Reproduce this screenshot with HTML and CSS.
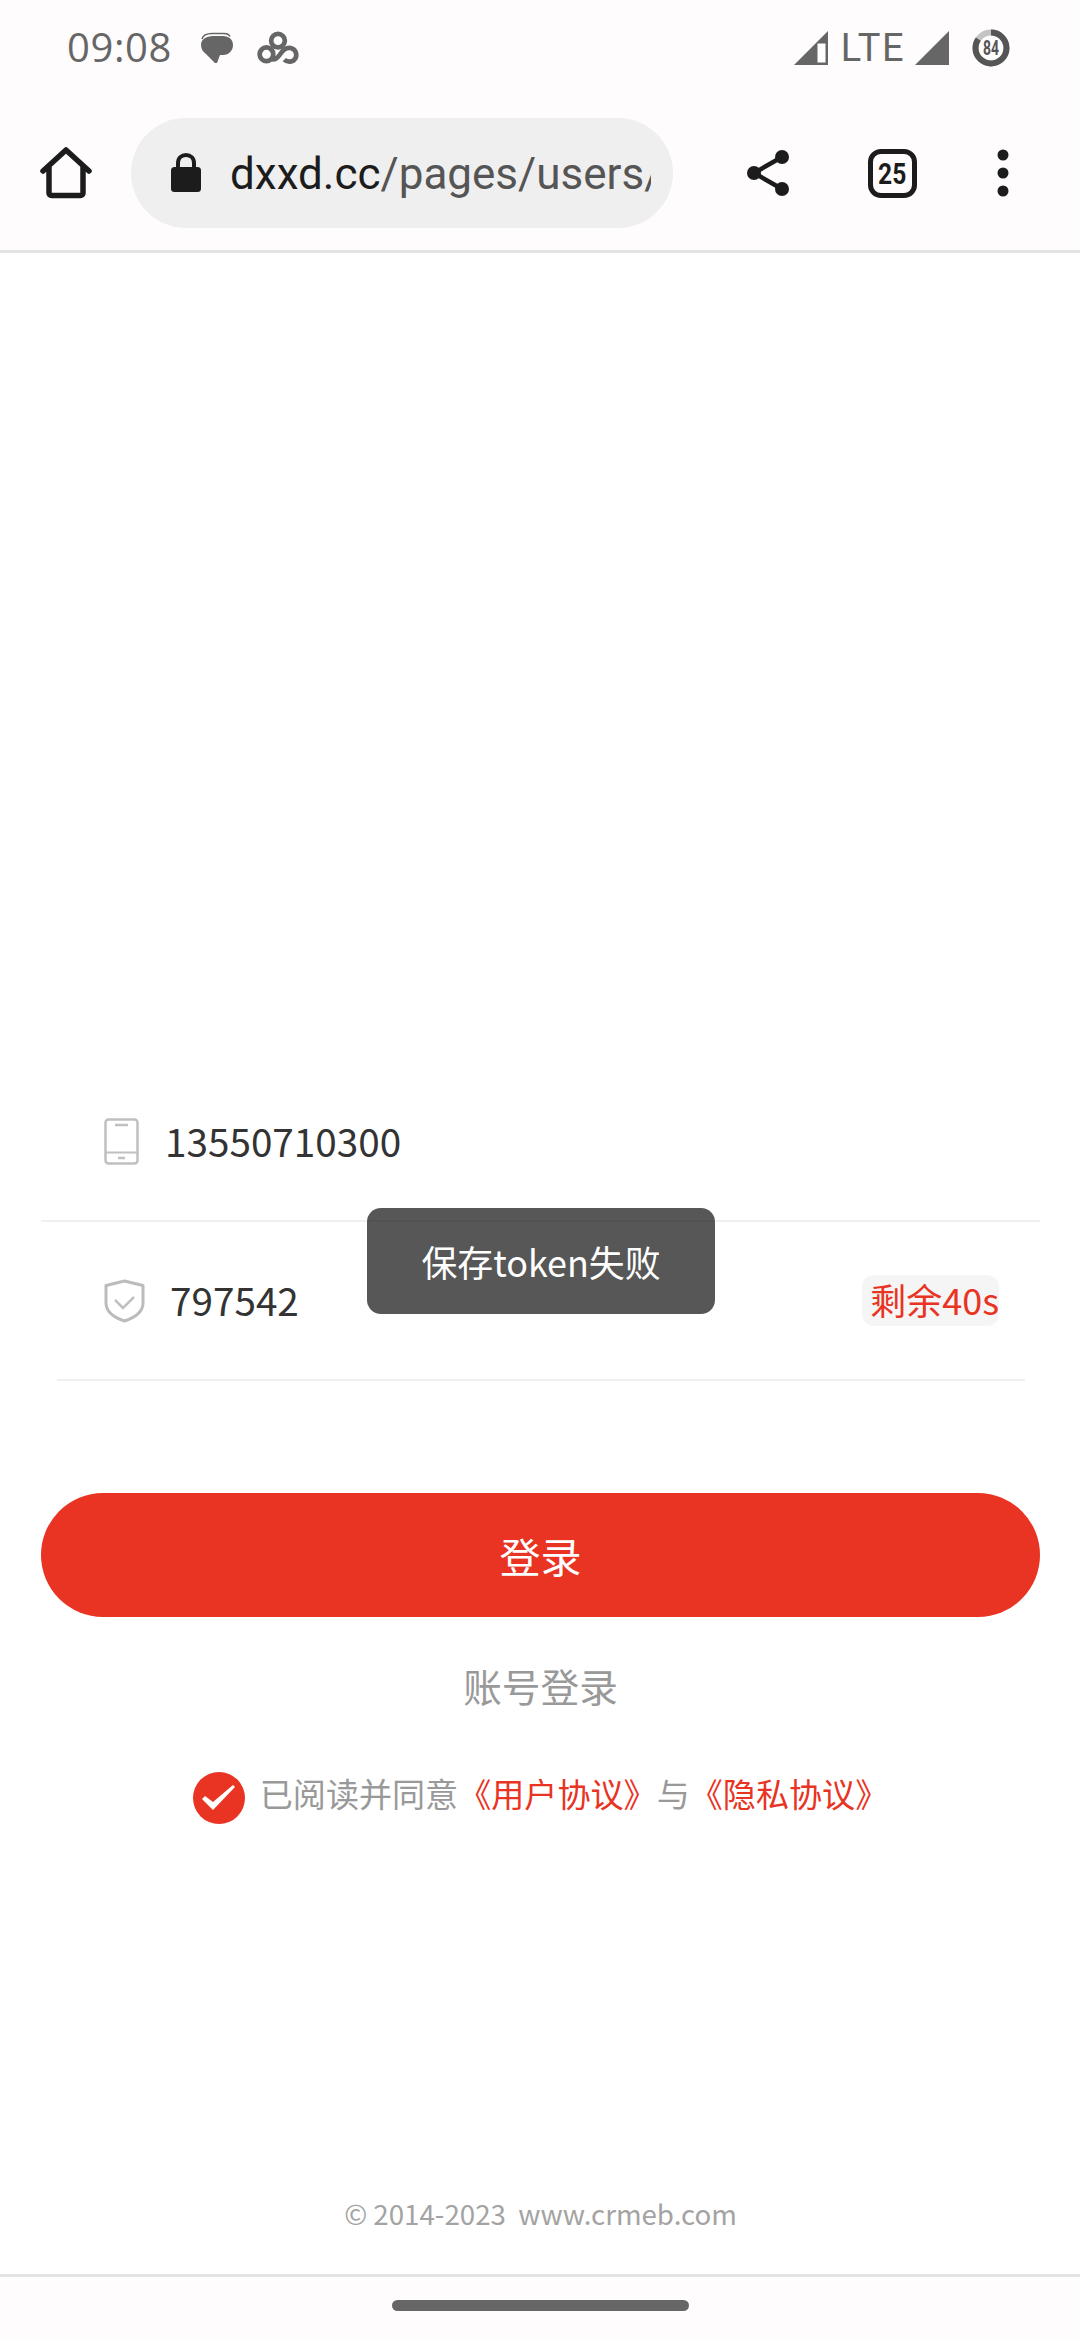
FILE: index.html
```html
<!DOCTYPE html>
<html lang="zh-CN">

<head>
    <meta charset="UTF-8" />
    <meta name="viewport" content="width=device-width, initial-scale=1.0" />
    <title>登录</title>
    <link rel="stylesheet" href="styles.css">
</head>

<body>
    <div class="status-bar">
        <div class="status-left">
            <span class="time">09:08</span>
            <svg class="icon-msg" width="34" height="32" viewBox="0 0 34 32">
                <path d="M2 7C3 3 7 1.500 12 1.500h12c3 0 5 1 6 3" fill="none" stroke="#666" stroke-width="1.500"/>
                <path d="M13 4h10c6 0 10 3.500 10 9s-4 10-10 10h-3l-3 8-2 0-9-9C3 20 1 17 1 13c0-5.500 5-9 12-9z" fill="#666"/>
            </svg>
            <svg class="icon-rings" width="42" height="34" viewBox="0 0 40 32">
                <g fill="none" stroke="#666" stroke-width="4.500">
                    <circle cx="20" cy="9" r="6.500"/>
                    <circle cx="9" cy="22" r="6.500"/>
                    <path d="M14 26c3 2 6-1 8-4s5-7 10-6c5 1 6 6 5 9-2 5-8 5-11 2"/>
                </g>
            </svg>
        </div>
        <div class="status-right">
            <svg width="34" height="34" viewBox="0 0 34 34">
                <path d="M0 34L34 0v34z" fill="#666"/>
                <path d="M23.500 12.500h8v19h-8z" fill="#fff"/>
            </svg>
            <span class="lte">LTE</span>
            <svg width="34" height="34" viewBox="0 0 34 34">
                <path d="M0 34L34 0v34z" fill="#666"/>
            </svg>
            <svg class="battery" width="38" height="38" viewBox="0 0 38 38">
                <circle cx="19" cy="19" r="15.500" fill="none" stroke="#c4c4c4" stroke-width="6"/>
                <circle cx="19" cy="19" r="15.500" fill="none" stroke="#555" stroke-width="6" stroke-dasharray="82 98" transform="rotate(-90 19 19)"/>
                <text x="19" y="26" text-anchor="middle" font-family="Roboto" font-weight="700" font-size="20" textLength="16" lengthAdjust="spacingAndGlyphs" fill="#555">84</text>
            </svg>
        </div>
    </div>

    <div class="toolbar">
        <svg class="tool-home" width="52" height="52" viewBox="0 0 52 52">
            <path d="M3 24L26 3l23 21M9 20v26c0 1.500 1 2.500 2.500 2.500h29c1.500 0 2.500-1 2.500-2.500V20" fill="none" stroke="#1c1c1c" stroke-width="5.500" stroke-linecap="round" stroke-linejoin="round"/>
        </svg>
        <div class="url-pill">
            <svg class="lock" width="32" height="40" viewBox="0 0 32 40">
                <path d="M8 16V10c0-5 3.500-8 8-8s8 3 8 8v6" fill="none" stroke="#1c1c1c" stroke-width="4"/>
                <rect x="1" y="14" width="30" height="25" rx="3.500" fill="#1c1c1c"/>
            </svg>
            <div class="url-text"><span class="url-host">dxxd.cc</span>/pages/users/login/index</div>
        </div>
        <svg class="tool-share" width="44" height="48" viewBox="0 0 44 48">
            <path d="M36 8L8 24l28 16" fill="none" stroke="#1c1c1c" stroke-width="4.500"/>
            <circle cx="36" cy="8" r="7" fill="#1c1c1c"/>
            <circle cx="8" cy="24" r="7" fill="#1c1c1c"/>
            <circle cx="36" cy="40" r="7" fill="#1c1c1c"/>
        </svg>
        <div class="tab-count"><span class="tab-num">25</span></div>
        <svg class="tool-more" width="12" height="48" viewBox="0 0 12 48">
            <circle cx="6" cy="6" r="5.500" fill="#1c1c1c"/>
            <circle cx="6" cy="24" r="5.500" fill="#1c1c1c"/>
            <circle cx="6" cy="42" r="5.500" fill="#1c1c1c"/>
        </svg>
    </div>

    <div class="main">
        <div class="row row-phone">
            <svg width="35" height="47" viewBox="0 0 35 47">
                <rect x="1.500" y="1.500" width="32" height="44" rx="3" fill="none" stroke="#c0c0c0" stroke-width="2.500"/>
                <path d="M1.500 34.500h32" stroke="#c0c0c0" stroke-width="2"/>
                <path d="M11 7h13M14 40h7" stroke="#c0c0c0" stroke-width="2.500"/>
            </svg>
            <span class="row-value phone-value">13550710300</span>
        </div>
        <div class="row row-code">
            <svg width="41" height="44" viewBox="0 0 41 44">
                <path d="M20.500 2L39 6.500V24c0 9-8 14.500-18.500 18C10 38.500 2 33 2 24V6.500z" fill="none" stroke="#bcbcbc" stroke-width="3" stroke-linejoin="round"/>
                <path d="M11 21l8 8 11-11" fill="none" stroke="#c0c0c0" stroke-width="2.500"/>
            </svg>
            <span class="row-value code-value">797542</span>
            <span class="timer">剩余40s</span>
        </div>

        <button class="login-btn" type="button">登录</button>
        <div class="switch-login">账号登录</div>

        <div class="agree">
            <svg class="agree-check" width="52" height="52" viewBox="0 0 52 52">
                <circle cx="26" cy="26" r="26" fill="#e93323"/>
                <path d="M9 27l3-3 8 6 20-17 2 2-22 23z" fill="#fff"/>
            </svg>
            <span class="agree-text">已阅读并同意<a class="agree-link">《用户协议》</a>与<a class="agree-link">《隐私协议》</a></span>
        </div>

        <div class="copyright">© 2014-2023&nbsp;&nbsp;www.crmeb.com</div>

        <div class="toast">保存token失败</div>
    </div>

    <div class="nav-bar">
        <div class="nav-handle"></div>
    </div>
</body>

</html>
```

FILE: styles.css
```css
body {
    font-family: "Noto Sans CJK SC", "Noto Sans", sans-serif;
    margin: 0;
    padding: 0;
    width: 1080px;
    height: 2340px;
    display: flex;
    flex-direction: column;
    background-color: #fff;
    overflow: hidden;
}

.status-bar {
    height: 96px;
    padding: 0 70px 0 67px;
    display: flex;
    justify-content: space-between;
    align-items: center;
    background-color: #fffcfd;
    color: #666;
    font-family: Roboto, sans-serif;
}

.status-left,
.status-right {
    display: flex;
    align-items: center;
}

.time {
    font-size: 40px;
    letter-spacing: 0.6px;
    line-height: 44px;
    margin-bottom: 2px;
    font-family: "Open Sans", sans-serif;
}

.icon-msg {
    margin-left: 28px;
}

.icon-rings {
    margin-left: 23px;
}

.lte {
    font-size: 38px;
    line-height: 34px;
    margin: 0 10px 0 13px;
    letter-spacing: 1.5px;
}

.battery {
    margin-left: 23px;
}

.toolbar {
    height: 154px;
    display: flex;
    align-items: center;
    background-color: #fffcfd;
    border-bottom: 3px solid #e3e3e3;
    padding-left: 40px;
}

.url-pill {
    width: 542px;
    height: 110px;
    margin-left: 39px;
    padding: 0 22px 0 39px;
    box-sizing: border-box;
    border-radius: 55px;
    background-color: #efefef;
    display: flex;
    align-items: center;
}

.lock {
    flex: none;
}

.url-text {
    margin-left: 28px;
    padding-top: 2px;
    font-family: Roboto, sans-serif;
    font-size: 44px;
    color: #555;
    white-space: nowrap;
    overflow: hidden;
}

.url-host {
    color: #1c1c1c;
}

.tool-share {
    margin-left: 73px;
}

.tab-count {
    width: 49px;
    height: 49px;
    margin-left: 78px;
    box-sizing: border-box;
    border: 5px solid #1c1c1c;
    border-radius: 13px;
    display: flex;
    justify-content: center;
    align-items: center;
    font-family: Roboto, sans-serif;
    font-weight: 700;
    font-size: 30px;
    color: #1c1c1c;
}

.tab-num {
    transform: scaleX(0.82);
}

.tool-more {
    margin-left: 80px;
}

.main {
    position: relative;
    flex: 1;
    padding: 810px 40px 41px 41px;
    display: flex;
    flex-direction: column;
}

.row {
    height: 159px;
    box-sizing: border-box;
    display: flex;
    align-items: center;
    border-bottom: 2px solid #f0f0f0;
}

.row-phone {
    padding: 0 41px 0 63px;
}

.row-code {
    margin: 0 15px 0 16px;
    padding: 0 26px 0 47px;
}

.row-value {
    font-size: 38.7px;
    color: #333;
    margin-bottom: 3px;
}

.phone-value {
    margin-left: 26px;
}

.code-value {
    margin-left: 25px;
}

.timer {
    margin-left: auto;
    width: 137px;
    height: 51px;
    border-radius: 12px;
    background-color: #f5f5f5;
    color: #e93323;
    font-size: 36px;
    line-height: 49px;
    text-align: right;
    white-space: nowrap;
}

.login-btn {
    height: 124px;
    margin-top: 112px;
    border: none;
    border-radius: 62px;
    background-color: #e93323;
    color: #fff;
    font-family: inherit;
    font-size: 41px;
    padding: 0;
}

.switch-login {
    margin-top: 38px;
    font-size: 38.7px;
    line-height: 60px;
    text-align: center;
    color: #999;
}

.agree {
    margin-top: 57px;
    height: 52px;
    display: flex;
    justify-content: center;
    align-items: center;
    font-size: 33.1px;
    color: #999;
}

.agree-text {
    margin-bottom: 10px;
}

.agree-check {
    margin-right: 15px;
}

.agree-link {
    color: #e93323;
}

.copyright {
    margin-top: auto;
    font-size: 27.7px;
    line-height: 40px;
    text-align: center;
    color: #a3a3a3;
}

.toast {
    position: absolute;
    left: 367px;
    top: 955px;
    width: 348px;
    height: 106px;
    border-radius: 14px;
    background-color: rgba(0, 0, 0, 0.66);
    color: #fff;
    font-size: 35.9px;
    line-height: 106px;
    text-align: center;
}

.nav-bar {
    height: 66px;
    box-sizing: border-box;
    border-top: 3px solid #e3e3e3;
    background-color: #fffcfd;
    display: flex;
    justify-content: center;
    padding-top: 23px;
}

.nav-handle {
    width: 297px;
    height: 11px;
    border-radius: 6px;
    background-color: #666;
}
```
